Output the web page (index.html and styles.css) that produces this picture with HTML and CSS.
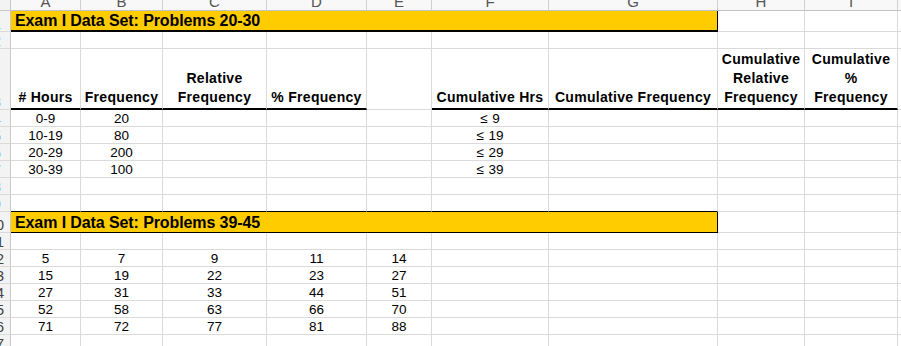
FILE: index.html
```html
<!DOCTYPE html>
<html>
<head>
<meta charset="utf-8">
<link rel="stylesheet" href="styles.css">
</head>
<body>
<div class="sheet">
  <!-- column header row -->
  <div class="corner"></div>
  <div class="ch"><span>A</span></div>
  <div class="ch"><span>B</span></div>
  <div class="ch"><span>C</span></div>
  <div class="ch"><span>D</span></div>
  <div class="ch"><span>E</span></div>
  <div class="ch"><span>F</span></div>
  <div class="ch"><span>G</span></div>
  <div class="ch"><span>H</span></div>
  <div class="ch"><span>I</span></div>
  <div class="ch last"></div>

  <!-- row 1 -->
  <div class="rh sel one"><span>1</span></div>
  <div class="c title t1">Exam I Data Set: Problems 20-30</div>
  <div class="c"></div><div class="c"></div><div class="c last"></div>

  <!-- row 2 -->
  <div class="rh sel one"><span>2</span></div>
  <div class="c"></div><div class="c"></div><div class="c"></div><div class="c"></div><div class="c"></div>
  <div class="c"></div><div class="c"></div><div class="c"></div><div class="c"></div><div class="c last"></div>

  <!-- row 3 headers -->
  <div class="rh sel one"><span>3</span></div>
  <div class="c hd thick">#&nbsp;Hours</div>
  <div class="c hd thick">Frequency</div>
  <div class="c hd thick">Relative<br>Frequency</div>
  <div class="c hd thick">%&nbsp;Frequency</div>
  <div class="c hd"></div>
  <div class="c hd thick">Cumulative&nbsp;Hrs</div>
  <div class="c hd thick">Cumulative&nbsp;Frequency</div>
  <div class="c hd thick">Cumulative<br>Relative<br>Frequency</div>
  <div class="c hd thick">Cumulative<br>%<br>Frequency</div>
  <div class="c last"></div>

  <!-- rows 4-7 -->
  <div class="rh sel one"><span>4</span></div>
  <div class="c d">0-9</div><div class="c d">20</div><div class="c"></div><div class="c"></div><div class="c"></div>
  <div class="c d"><span class="le">≤</span>&nbsp;9</div><div class="c"></div><div class="c"></div><div class="c"></div><div class="c last"></div>

  <div class="rh sel one"><span>5</span></div>
  <div class="c d">10-19</div><div class="c d">80</div><div class="c"></div><div class="c"></div><div class="c"></div>
  <div class="c d"><span class="le">≤</span>&nbsp;19</div><div class="c"></div><div class="c"></div><div class="c"></div><div class="c last"></div>

  <div class="rh sel one"><span>6</span></div>
  <div class="c d">20-29</div><div class="c d">200</div><div class="c"></div><div class="c"></div><div class="c"></div>
  <div class="c d"><span class="le">≤</span>&nbsp;29</div><div class="c"></div><div class="c"></div><div class="c"></div><div class="c last"></div>

  <div class="rh sel one"><span>7</span></div>
  <div class="c d">30-39</div><div class="c d">100</div><div class="c"></div><div class="c"></div><div class="c"></div>
  <div class="c d"><span class="le">≤</span>&nbsp;39</div><div class="c"></div><div class="c"></div><div class="c"></div><div class="c last"></div>

  <!-- row 8 -->
  <div class="rh sel one"><span>8</span></div>
  <div class="c"></div><div class="c"></div><div class="c"></div><div class="c"></div><div class="c"></div>
  <div class="c"></div><div class="c"></div><div class="c"></div><div class="c"></div><div class="c last"></div>

  <!-- row 9 -->
  <div class="rh sel one"><span>9</span></div>
  <div class="c bb"></div><div class="c bb"></div><div class="c bb"></div><div class="c bb"></div><div class="c bb"></div>
  <div class="c bb"></div><div class="c bb"></div><div class="c"></div><div class="c"></div><div class="c last"></div>

  <!-- row 10 -->
  <div class="rh"><span>10</span></div>
  <div class="c title t2">Exam I Data Set: Problems 39-45</div>
  <div class="c"></div><div class="c"></div><div class="c last"></div>

  <!-- row 11 -->
  <div class="rh"><span>11</span></div>
  <div class="c"></div><div class="c"></div><div class="c"></div><div class="c"></div><div class="c"></div>
  <div class="c"></div><div class="c"></div><div class="c"></div><div class="c"></div><div class="c last"></div>

  <!-- rows 12-16 -->
  <div class="rh"><span>12</span></div>
  <div class="c d">5</div><div class="c d">7</div><div class="c d">9</div><div class="c d">11</div><div class="c d">14</div>
  <div class="c"></div><div class="c"></div><div class="c"></div><div class="c"></div><div class="c last"></div>

  <div class="rh"><span>13</span></div>
  <div class="c d">15</div><div class="c d">19</div><div class="c d">22</div><div class="c d">23</div><div class="c d">27</div>
  <div class="c"></div><div class="c"></div><div class="c"></div><div class="c"></div><div class="c last"></div>

  <div class="rh"><span>14</span></div>
  <div class="c d">27</div><div class="c d">31</div><div class="c d">33</div><div class="c d">44</div><div class="c d">51</div>
  <div class="c"></div><div class="c"></div><div class="c"></div><div class="c"></div><div class="c last"></div>

  <div class="rh"><span>15</span></div>
  <div class="c d">52</div><div class="c d">58</div><div class="c d">63</div><div class="c d">66</div><div class="c d">70</div>
  <div class="c"></div><div class="c"></div><div class="c"></div><div class="c"></div><div class="c last"></div>

  <div class="rh"><span>16</span></div>
  <div class="c d">71</div><div class="c d">72</div><div class="c d">77</div><div class="c d">81</div><div class="c d">88</div>
  <div class="c"></div><div class="c"></div><div class="c"></div><div class="c"></div><div class="c last"></div>

  <!-- row 17 -->
  <div class="rh"><span>17</span></div>
  <div class="c"></div><div class="c"></div><div class="c"></div><div class="c"></div><div class="c"></div>
  <div class="c"></div><div class="c"></div><div class="c"></div><div class="c"></div><div class="c last"></div>
</div>
</body>
</html>
```

FILE: styles.css
```css
html, body {
  margin: 0;
  padding: 0;
  background: #ffffff;
  overflow: hidden;
}

.sheet {
  display: grid;
  grid-template-columns: 11px 70px 82px 104px 100px 65px 117px 169px 87px 93px 1fr;
  grid-template-rows: 11px 21px 17px 61px 17px 17px 17px 17px 17px 17px 21px 17px 17px 17px 17px 17px 17px 17px;
  width: 901px;
  font-family: "Liberation Sans", Arial, sans-serif;
  color: #000;
}

.sheet > div {
  box-sizing: border-box;
  overflow: hidden;
  white-space: nowrap;
}

.corner {
  background: #f3f3f3;
  border-right: 1px solid #c8c8c8;
  border-bottom: 1px solid #c8c8c8;
}

.ch {
  background: #f8f8f8;
  border-right: 1px solid #d0d0d0;
  border-bottom: 1px solid #c2c2c2;
  display: flex;
  justify-content: center;
  align-items: flex-end;
  font-size: 15px;
  line-height: 15px;
  color: #555;
}

.ch span {
  margin-bottom: 1px;
}

.ch.last,
.c.last {
  border-right: none;
}

.rh {
  background: #f3f3f3;
  border-right: 1px solid #c8c8c8;
  border-bottom: 1px solid #dadada;
  display: flex;
  justify-content: flex-end;
  align-items: flex-end;
  padding-right: 6px;
  font-size: 15px;
  line-height: 15px;
  color: #444;
}

.rh.one {
  padding-right: 9px;
}

.rh span {
  margin-bottom: 0;
}

.rh.sel {
  color: #86b3e3;
}

.c {
  border-right: 1px solid #dadada;
  border-bottom: 1px solid #dadada;
}

.title {
  grid-column: span 7;
  background: #ffcc00;
  border-right: 1px solid #000;
  border-bottom: 1px solid #000;
  font-weight: bold;
  font-size: 16px;
  letter-spacing: -0.1px;
  line-height: 16px;
  display: flex;
  align-items: flex-end;
  padding-left: 4px;
  padding-bottom: 1px;
}

.t1 {
  border-bottom-width: 2px;
}

.hd {
  font-weight: bold;
  font-size: 14px;
  letter-spacing: 0.3px;
  line-height: 19px;
  text-align: center;
  display: flex;
  flex-direction: column;
  justify-content: flex-end;
  align-items: center;
  padding-bottom: 1px;
}

.thick {
  border-bottom: 2px solid #000;
}

.bb {
  border-bottom-color: #000;
}

.d {
  font-size: 13.5px;
  line-height: 14px;
  display: flex;
  justify-content: center;
  align-items: flex-end;
  padding-bottom: 0;
}

.le {
  display: inline-block;
  margin-right: 1px;
}
```
